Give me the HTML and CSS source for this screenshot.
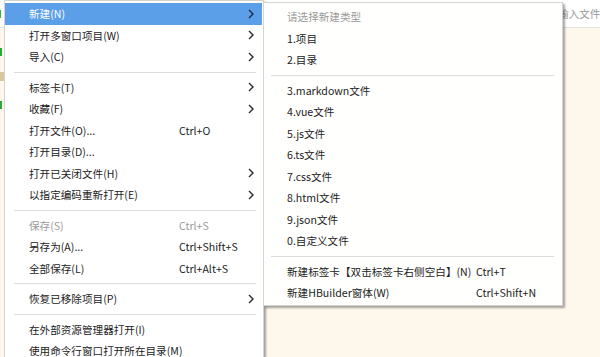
FILE: index.html
```html
<!DOCTYPE html>
<html lang="zh-CN">
<head>
    <meta charset="UTF-8">
    <title>HBuilder 文件菜单</title>
    <link rel="stylesheet" href="styles.css">
</head>
<body>
    <div class="app">
        <div class="topbar">
            <span class="tag"></span>
            <span class="search">输入文件名</span>
        </div>
        <div class="workspace">
            <div class="gutter">
                <span class="mark mark-green"></span>
                <span class="mark mark-tan"></span>
                <span class="mark mark-green"></span>
            </div>
        </div>

        <ul class="menu main-menu">
            <li class="item active"><span class="label">新建(N)</span><span class="key"></span><span class="arrow"><svg viewBox="0 0 6 10"><polyline points="1,1 5,5 1,9"/></svg></span></li>
            <li class="item"><span class="label">打开多窗口项目(W)</span><span class="key"></span><span class="arrow"><svg viewBox="0 0 6 10"><polyline points="1,1 5,5 1,9"/></svg></span></li>
            <li class="item"><span class="label">导入(C)</span><span class="key"></span><span class="arrow"><svg viewBox="0 0 6 10"><polyline points="1,1 5,5 1,9"/></svg></span></li>
            <li class="sep"></li>
            <li class="item"><span class="label">标签卡(T)</span><span class="key"></span><span class="arrow"><svg viewBox="0 0 6 10"><polyline points="1,1 5,5 1,9"/></svg></span></li>
            <li class="item"><span class="label">收藏(F)</span><span class="key"></span><span class="arrow"><svg viewBox="0 0 6 10"><polyline points="1,1 5,5 1,9"/></svg></span></li>
            <li class="item"><span class="label">打开文件(O)...</span><span class="key">Ctrl+O</span><span class="arrow"></span></li>
            <li class="item"><span class="label">打开目录(D)...</span><span class="key"></span><span class="arrow"></span></li>
            <li class="item"><span class="label">打开已关闭文件(H)</span><span class="key"></span><span class="arrow"><svg viewBox="0 0 6 10"><polyline points="1,1 5,5 1,9"/></svg></span></li>
            <li class="item"><span class="label">以指定编码重新打开(E)</span><span class="key"></span><span class="arrow"><svg viewBox="0 0 6 10"><polyline points="1,1 5,5 1,9"/></svg></span></li>
            <li class="sep"></li>
            <li class="item disabled"><span class="label">保存(S)</span><span class="key">Ctrl+S</span><span class="arrow"></span></li>
            <li class="item"><span class="label">另存为(A)...</span><span class="key">Ctrl+Shift+S</span><span class="arrow"></span></li>
            <li class="item"><span class="label">全部保存(L)</span><span class="key">Ctrl+Alt+S</span><span class="arrow"></span></li>
            <li class="sep"></li>
            <li class="item"><span class="label">恢复已移除项目(P)</span><span class="key"></span><span class="arrow"><svg viewBox="0 0 6 10"><polyline points="1,1 5,5 1,9"/></svg></span></li>
            <li class="sep"></li>
            <li class="item"><span class="label">在外部资源管理器打开(I)</span><span class="key"></span><span class="arrow"></span></li>
            <li class="item"><span class="label">使用命令行窗口打开所在目录(M)</span><span class="key"></span><span class="arrow"></span></li>
        </ul>

        <ul class="menu sub-menu">
            <li class="item disabled"><span class="label">请选择新建类型</span><span class="key"></span></li>
            <li class="item"><span class="label">1.项目</span><span class="key"></span></li>
            <li class="item"><span class="label">2.目录</span><span class="key"></span></li>
            <li class="sep"></li>
            <li class="item"><span class="label">3.markdown文件</span><span class="key"></span></li>
            <li class="item"><span class="label">4.vue文件</span><span class="key"></span></li>
            <li class="item"><span class="label">5.js文件</span><span class="key"></span></li>
            <li class="item"><span class="label">6.ts文件</span><span class="key"></span></li>
            <li class="item"><span class="label">7.css文件</span><span class="key"></span></li>
            <li class="item"><span class="label">8.html文件</span><span class="key"></span></li>
            <li class="item"><span class="label">9.json文件</span><span class="key"></span></li>
            <li class="item"><span class="label">0.自定义文件</span><span class="key"></span></li>
            <li class="sep"></li>
            <li class="item"><span class="label">新建标签卡【双击标签卡右侧空白】(N)</span><span class="key">Ctrl+T</span></li>
            <li class="item"><span class="label">新建HBuilder窗体(W)</span><span class="key">Ctrl+Shift+N</span></li>
        </ul>
    </div>
</body>
</html>
```

FILE: styles.css
```css
:root {
    --cream: #fdf8eb;
    --text: #222;
    --muted: #9a9a9a;
    --highlight: #5b9fe8;
    --line: #dcdcdc;
}

* {
    box-sizing: border-box;
}

body {
    margin: 0;
    width: 600px;
    height: 357px;
    overflow: hidden;
    font-family: "Noto Sans CJK SC", "Microsoft YaHei", sans-serif;
    font-size: 10.6px;
    color: var(--text);
    background: var(--cream);
}

.app {
    position: relative;
    width: 600px;
    height: 357px;
    display: flex;
    flex-direction: column;
}

.topbar {
    height: 28px;
    background: #fff;
    border-bottom: 1px solid #e2e2e2;
    display: flex;
    align-items: center;
    white-space: nowrap;
    overflow: hidden;
}

.tag {
    width: 4px;
    height: 8px;
    border: 1px solid #3cae48;
    border-left: none;
}

.search {
    margin-left: 557px;
    color: var(--muted);
}

.workspace {
    flex: 1;
    display: flex;
}

.gutter {
    width: 4px;
    display: flex;
    flex-direction: column;
}

.mark {
    display: block;
    width: 4px;
}

.mark-green {
    height: 8px;
    margin-top: 20px;
    border-left: 2px solid #2ca83a;
}

.mark-tan {
    height: 9px;
    margin-top: 16px;
    background: #d8c8a0;
}

/* menus */

.menu {
    position: absolute;
    margin: 0;
    list-style: none;
    background: #fff;
    border: 1px solid #d4d4d4;
    box-shadow: 2px 2px 2px rgba(0, 0, 0, 0.35);
}

.main-menu {
    left: 4px;
    top: 0;
    width: 260px;
    padding: 2px 1px 2px 0;
}

.sub-menu {
    left: 263px;
    top: 2px;
    width: 300px;
    padding: 3px 0 1px 0;
    background: #fffffd;
}

.item {
    height: 21.5px;
    display: grid;
    align-items: center;
    white-space: nowrap;
}

.main-menu .item {
    grid-template-columns: 150px 1fr 6px;
    padding: 0 8px 0 24px;
}

.sub-menu .item {
    grid-template-columns: 189px 1fr;
    padding: 0 8px 0 23px;
}

.item.active {
    background: var(--highlight);
    color: #fff;
}

.item.disabled {
    color: var(--muted);
}

.arrow svg {
    display: block;
    width: 6px;
    height: 10px;
    fill: none;
    stroke: #2a2a2a;
    stroke-width: 1.4;
}

.item.active .arrow svg {
    stroke: #1a2b44;
}

.sep {
    height: 9px;
    display: flex;
    align-items: center;
}

.sep::after {
    content: "";
    flex: 1;
    height: 1px;
    background: var(--line);
}

.main-menu .sep {
    padding: 0 6px 0 9px;
}

.sub-menu .sep {
    padding: 0 8px 0 7px;
}
```
